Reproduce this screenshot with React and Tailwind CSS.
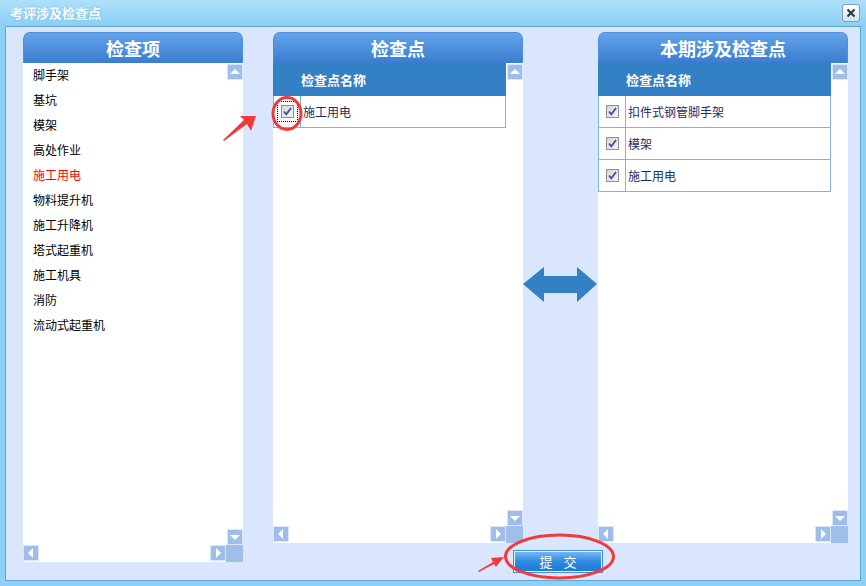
import React from 'react';

const font = { fontFamily: '"Noto Sans CJK SC", "Noto Sans", sans-serif' };

const leftItems = ['脚手架', '基坑', '模架', '高处作业', '施工用电', '物料提升机', '施工升降机', '塔式起重机', '施工机具', '消防', '流动式起重机'];
const pickedRows = ['扣件式钢管脚手架', '模架', '施工用电'];

// 小滚动按钮
const ScrollBtn = ({ dir }) => {
    const tri = {
        up: '3,10 8,5 13,10',
        down: '3,6 8,11 13,6',
        left: '10,3 5,8 10,13',
        right: '6,3 11,8 6,13',
    }[dir];
    return (
        <div className="w-[16px] h-[16px] bg-[#9ebde8] border border-[#dbe6fa] flex items-center justify-center shrink-0">
            <svg width="14" height="14" viewBox="1 1 14 14"><polygon points={tri} fill="#ffffff" /></svg>
        </div>
    );
};

const Check = ({ focus }) => (
    <span className={`inline-flex items-center justify-center ${focus ? 'p-[3px] border border-dotted border-black' : ''}`}>
        <span className="w-[13px] h-[13px] border border-[#8e8f8f] bg-gradient-to-br from-[#d8d8d8] to-[#f4f4f4] flex items-center justify-center">
            <svg width="11" height="11" viewBox="0 0 11 11">
                <path d="M2 5.5 L4.3 8.3 L9 2" stroke="#3a4fa3" strokeWidth="1.8" fill="none" />
            </svg>
        </span>
    </span>
);

const PanelHeader = ({ title }) => (
    <div className="h-[31px] rounded-t-[7px] bg-gradient-to-b from-[#64a4ea] to-[#3a7ccf] border border-[#4f8fdc] border-b-0 flex items-center justify-center text-white font-bold text-[18px] shrink-0">
        {title}
    </div>
);

// 面板主体: 内容 + 右侧竖滚动条 + 底部横滚动条
const PanelBody = ({ children }) => (
    <div className="flex-1 bg-white flex flex-col min-h-0">
        <div className="flex-1 flex min-h-0">
            <div className="flex-1 min-w-0">{children}</div>
            <div className="w-[17px] flex flex-col justify-between items-center pt-[1px]">
                <ScrollBtn dir="up" />
                <ScrollBtn dir="down" />
            </div>
        </div>
        <div className="h-[17px] flex">
            <ScrollBtn dir="left" />
            <div className="flex-1" />
            <ScrollBtn dir="right" />
            <div className="w-[17px] bg-[#a0bfe8]" />
        </div>
    </div>
);

const TableHead = () => (
    <div className="h-[33px] bg-[#3380c5] flex items-center text-white font-bold text-[13px]">
        <div className="w-[28px]" />
        <div>检查点名称</div>
    </div>
);

const TableRow = ({ name, focus }) => (
    <div className="h-[32px] flex border-l border-r border-b border-[#7fb6d6] text-[12px] text-[#1d2b68]">
        <div className="w-[27px] border-r border-[#7fb6d6] flex items-center justify-center">
            <Check focus={focus} />
        </div>
        <div className="flex items-center pl-[2px]">{name}</div>
    </div>
);

const App = () => {
    return (
        <div className="w-[866px] h-[586px] bg-[#8dd0f3] flex flex-col relative overflow-hidden select-none" style={font}>
            {/* 标题栏 */}
            <div className="h-[26px] bg-gradient-to-b from-[#ade0fa] to-[#8ccff3] flex items-center justify-between pl-[10px] pr-[6px] shrink-0">
                <span className="text-white text-[13px] font-bold [text-shadow:0_0_2px_#6fb5e0]">考评涉及检查点</span>
                <div className="w-[18px] h-[18px] rounded-[3px] border border-[#7f9fba] bg-gradient-to-b from-[#ffffff] to-[#d6e3ee] flex items-center justify-center">
                    <svg width="10" height="10" viewBox="0 0 10 10">
                        <path d="M1.5 1.5 L8.5 8.5 M8.5 1.5 L1.5 8.5" stroke="#2f3a45" strokeWidth="2.2" />
                    </svg>
                </div>
            </div>

            {/* 主体 */}
            <div className="flex-1 mx-[5px] mb-[5px] border border-[#5ea8d8] bg-[#d9e6fd] flex items-start pt-[5px] pl-[17px]">
                {/* 检查项 */}
                <div className="w-[220px] h-[530px] flex flex-col">
                    <PanelHeader title="检查项" />
                    <PanelBody>
                        <div className="pl-[10px] text-[12px] text-black -mt-[1px]">
                            {leftItems.map((t, i) => (
                                <div key={i} className={`h-[25px] flex items-center ${t === '施工用电' ? 'text-[#ff0000]' : ''}`}>{t}</div>
                            ))}
                        </div>
                    </PanelBody>
                </div>

                <div className="ml-[30px] flex flex-col">
                    <div className="flex h-[511px]">
                        {/* 检查点 */}
                        <div className="w-[250px] flex flex-col">
                            <PanelHeader title="检查点" />
                            <PanelBody>
                                <TableHead />
                                <TableRow name="施工用电" focus />
                            </PanelBody>
                        </div>

                        {/* 双向箭头 */}
                        <div className="w-[75px] flex items-center justify-center pb-[5px]">
                            <svg width="75" height="36" viewBox="0 0 75 36">
                                <polygon points="0,17 21,0 21,9 54,9 54,0 74,17 54,35 54,26 21,26 21,35" fill="#3380c5" />
                            </svg>
                        </div>

                        {/* 本期涉及检查点 */}
                        <div className="w-[250px] flex flex-col">
                            <PanelHeader title="本期涉及检查点" />
                            <PanelBody>
                                <TableHead />
                                {pickedRows.map((r, i) => <TableRow key={i} name={r} />)}
                            </PanelBody>
                        </div>
                    </div>

                    <div className="flex justify-center pr-[5px] mt-[7px]">
                        <button className="w-[90px] h-[23px] border border-[#3f8edb] p-[1px] bg-[#e8f2fd]">
                            <span className="w-full h-full flex items-center justify-center gap-[11px] bg-gradient-to-b from-[#74b6f0] via-[#2e8be0] to-[#1f7ad6] text-white text-[13px]">
                                <span>提</span><span>交</span>
                            </span>
                        </button>
                    </div>
                </div>
            </div>

            {/* 红色标注 */}
            <svg className="absolute left-0 top-0 pointer-events-none" width="866" height="586">
                <ellipse cx="287" cy="113.5" rx="14" ry="16" fill="none" stroke="#f23a3a" strokeWidth="3" />
                <polygon points="223,140 244,120 240,116 256,116 251,131 247,124 224,141" fill="#f23a3a" />
                <ellipse cx="559.5" cy="556.5" rx="54" ry="21.5" fill="none" stroke="#f23a3a" strokeWidth="3" />
                <polygon points="478,571 493,562 491,558 504,557 496,567 494,564 479,572" fill="#f23a3a" />
            </svg>
        </div>
    );
};

export default App;
